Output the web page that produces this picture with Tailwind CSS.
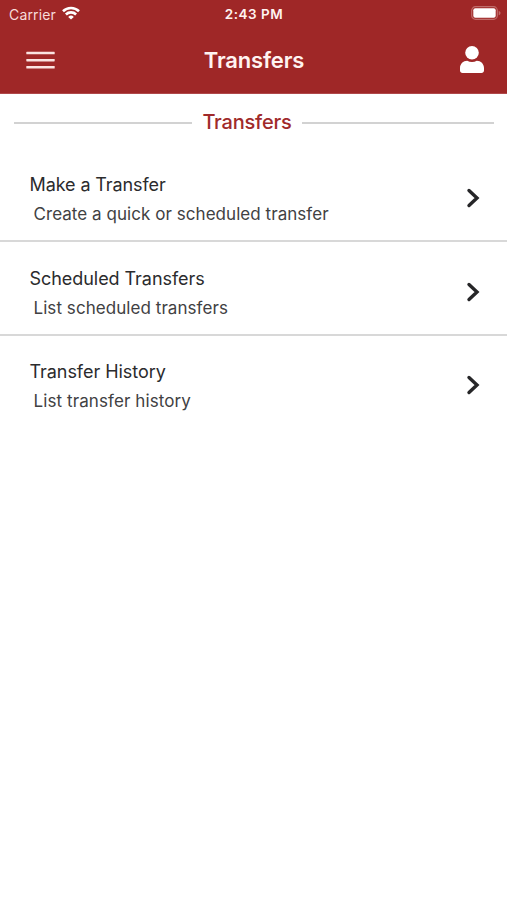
<!DOCTYPE html>
<html lang="en">
<head>
<meta charset="utf-8">
<title>Transfers</title>
<script src="https://cdn.jsdelivr.net/npm/@tailwindcss/browser@4"></script>
</head>
<body class="bg-white font-['Inter','Liberation_Sans',sans-serif] text-[#2b2b2d]">
<div class="flex h-[900px] w-[507px] flex-col overflow-hidden">
  <header class="h-[94px] shrink-0 border-b border-[#b0484a] bg-[#9f2727] text-[#fff3f1]">
    <div class="grid h-[27px] grid-cols-3 items-center">
      <div class="flex items-center gap-[6px] pl-[9px] text-[#f7dcda]">
        <span class="text-[14px] leading-[27px] tracking-[0.15px]">Carrier</span>
        <svg class="-mt-[2px] h-[14px] w-[18px]" viewBox="0 0 18 14" fill="none" stroke="#fff" stroke-width="2.6">
          <path d="M1 5.3a11.5 11.5 0 0 1 16 0"/>
          <path d="M3.9 8.5a7.3 7.3 0 0 1 10.2 0"/>
          <path d="M9 13.6L6.2 10.9a4 4 0 0 1 5.6 0z" fill="#fff" stroke="none"/>
        </svg>
      </div>
      <div class="pl-px text-center text-[13.5px] leading-[28px] font-semibold tracking-[0.5px]">2:43 PM</div>
      <div class="flex justify-end pr-[6px]">
        <svg class="-mt-[2px] h-[14px] w-[30px]" viewBox="0 0 30 14">
          <rect x="0.7" y="0.7" width="25.6" height="12.6" rx="3.8" fill="none" stroke="#c06c6a" stroke-width="1.2"/>
          <rect x="2.3" y="2.3" width="22.4" height="9.4" rx="2" fill="#fff"/>
          <path d="M27.7 4.7v4.6c1-.4 1.8-1.3 1.8-2.3s-.8-1.9-1.8-2.3z" fill="#c06c6a"/>
        </svg>
      </div>
    </div>
    <div class="grid h-[66px] grid-cols-3 items-center">
      <button class="ml-[26px] w-[29px]" aria-label="Menu">
        <svg class="h-[18px] w-[29px]" viewBox="0 0 29 18" fill="#fbe3e1">
          <rect x="0.3" y="0.8" width="28.4" height="2.5" rx="0.6"/>
          <rect x="0.3" y="7.9" width="28.4" height="2.5" rx="0.6"/>
          <rect x="0.3" y="15" width="28.4" height="2.5" rx="0.6"/>
        </svg>
      </button>
      <h1 class="pl-px text-center text-[22px] leading-[30px] font-semibold tracking-[-0.15px]">Transfers</h1>
      <div class="flex justify-end pr-[23px]">
        <svg class="-mt-[2px] h-[27px] w-[24px]" viewBox="0 0 24 27" fill="#fff">
          <circle cx="12" cy="6.8" r="6.8"/>
          <path d="M7.2 14.8c1.5.8 3.1 1.2 4.8 1.2s3.3-.4 4.8-1.2c4 0 7.2 3.2 7.2 7.2v2.5c0 1.4-1.1 2.5-2.5 2.5h-19C1.1 27 0 25.9 0 24.5V22c0-4 3.2-7.2 7.2-7.2z"/>
        </svg>
      </div>
    </div>
  </header>
  <main>
    <div class="mr-[13px] ml-[14px] flex h-[56px] items-center">
      <span class="mt-px h-[2px] w-[178px] bg-[#d2d2d2]"></span>
      <h2 class="flex-1 text-center text-[20px] leading-[28px] font-medium tracking-[-0.2px] text-[#a02a2a]">Transfers</h2>
      <span class="mt-px h-[2px] w-[192px] bg-[#d2d2d2]"></span>
    </div>
    <ul>
      <li class="flex h-[92px] items-center justify-between border-b-2 border-[#d8d8d8] pr-[27px] pl-[29.5px]">
        <div class="pt-[10px]">
          <div class="text-[18px] leading-[28px] tracking-[-0.1px]">Make a Transfer</div>
          <div class="pl-[4px] text-[17px] leading-[30px] tracking-[0.05px] text-[#414143]">Create a quick or scheduled transfer</div>
        </div>
        <svg class="mt-[6px] h-[20px] w-[14px]" viewBox="0 0 14 20" fill="none" stroke="#262628" stroke-width="3.4" stroke-linecap="round"><path d="M3 2.5l8 7.500-8 7.500"/></svg>
      </li>
      <li class="flex h-[94px] items-center justify-between border-b-2 border-[#d8d8d8] pr-[27px] pl-[29.5px]">
        <div class="pt-[11px]">
          <div class="text-[18px] leading-[28px] tracking-[-0.05px]">Scheduled Transfers</div>
          <div class="pl-[4px] text-[17px] leading-[30px] tracking-[0.06px] text-[#414143]">List scheduled transfers</div>
        </div>
        <svg class="mt-[8px] h-[20px] w-[14px]" viewBox="0 0 14 20" fill="none" stroke="#262628" stroke-width="3.4" stroke-linecap="round"><path d="M3 2.5l8 7.500-8 7.500"/></svg>
      </li>
      <li class="flex h-[92px] items-center justify-between pr-[27px] pl-[29.5px]">
        <div class="pt-[10px]">
          <div class="text-[18px] leading-[28px] tracking-[-0.05px]">Transfer History</div>
          <div class="pl-[4px] text-[17px] leading-[30px] tracking-[0.1px] text-[#414143]">List transfer history</div>
        </div>
        <svg class="mt-[6px] h-[20px] w-[14px]" viewBox="0 0 14 20" fill="none" stroke="#262628" stroke-width="3.4" stroke-linecap="round"><path d="M3 2.5l8 7.500-8 7.500"/></svg>
      </li>
    </ul>
  </main>
</div>
</body>
</html>
